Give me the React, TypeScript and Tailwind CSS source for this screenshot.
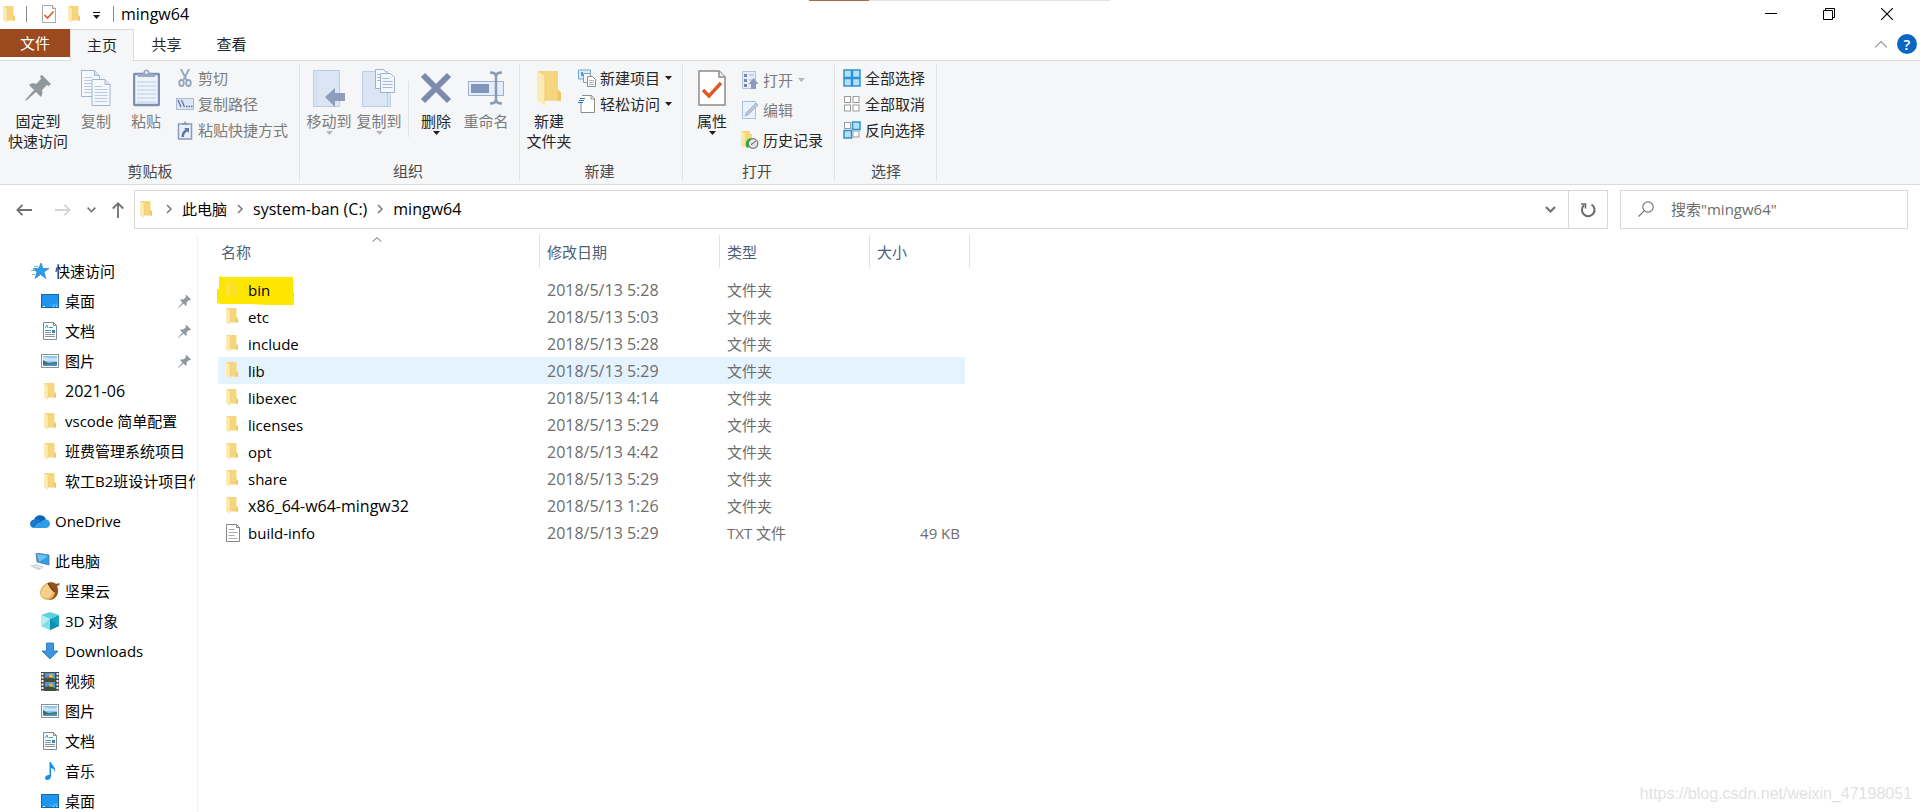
import type { ReactNode } from "react";

const Folder = ({ className = "w-3 h-[17px]" }: { className?: string }) => (
  <svg viewBox="0 0 24 34" className={className} preserveAspectRatio="none">
    <path d="M1 0H21V18L24 21V29H5Z" fill="#f5d67f" />
    <path d="M21 18l3 3v8h-4z" fill="#eec765" />
    <path d="M0 0l8 5v29L0 29z" fill="#fdebb6" />
    <path d="M8 5v24" stroke="#ecca70" strokeWidth="1" />
  </svg>
);

const CheckedDoc = ({ className }: { className: string }) => (
  <svg viewBox="0 0 28 36" className={className} fill="none">
    <path d="M1 1h20l6 6v28H1z" fill="#fff" stroke="#8c8c8c" strokeWidth="1.5" />
    <path d="M21 1v6h6" stroke="#8c8c8c" strokeWidth="1.5" fill="#eee" />
    <path d="M5 20l6 6L23 13" stroke="#dd5a22" strokeWidth="3.4" />
  </svg>
);

const Pin = ({ className }: { className: string }) => (
  <svg viewBox="0 0 26 26" className={className} fill="#8f989e">
    <path d="M17 0l9 9-2 2-2-1-5 5c1 3 0 5-1 7l-5-5-9 8-2 1 1-2 8-9-5-5c2-2 5-2 7-1l5-5-1-3z" />
  </svg>
);

const Arrow = ({ className = "text-[#1f1f1f]" }: { className?: string }) => (
  <svg viewBox="0 0 7 4" className={`w-[7px] h-1 shrink-0 ${className}`}>
    <path d="M0 0h7L3.5 4z" fill="currentColor" />
  </svg>
);

const Chevron = () => (
  <svg viewBox="0 0 6 10" className="w-[6px] h-[10px]" fill="none" stroke="#777" strokeWidth="1.5">
    <path d="M1 1l4 4-4 4" />
  </svg>
);

const ChevronDown = () => (
  <svg viewBox="0 0 11 7" className="w-[11px] h-[7px]" fill="none" stroke="#6f6f6f" strokeWidth="2">
    <path d="M1 1l4.5 4.5L10 1" />
  </svg>
);

const Page = ({ x, y }: { x: number; y: number }) => (
  <g transform={`translate(${x} ${y})`}>
    <path d="M.5.5h13l5 5v21h-18z" fill="#f4f8fd" stroke="#a3b5d3" />
    <path d="M13.5.5v5h5" fill="#dce6f4" stroke="#a3b5d3" />
    <path d="M3 7.5h8M3 10.5h13M3 13.5h13M3 16.5h13M3 19.5h13M3 22.5h13" stroke="#bccae0" />
  </g>
);

const CopyIcon = () => (
  <svg viewBox="0 0 30 37" className="w-[30px] h-[37px]">
    <Page x={0} y={0} />
    <Page x={10.5} y={9} />
  </svg>
);

const PasteIcon = () => (
  <svg viewBox="0 0 27 38" className="w-[27px] h-[38px]">
    <rect x="1" y="5" width="25" height="31" rx="1" fill="#eef4fb" stroke="#8090b4" strokeWidth="2.5" />
    <path d="M4 13h19M4 17h19M4 21h19M4 25h19M4 29h19M4 33h19" stroke="#bccbe2" />
    <path d="M5 8V5h5c0-6 7-6 7 0h5v3z" fill="#9aa9c6" />
    <circle cx="13.5" cy="3.5" r="1.3" fill="#f5f6f7" />
  </svg>
);

const ScissorsIcon = () => (
  <svg viewBox="0 0 18 18" className="w-[18px] h-[18px]" fill="none" stroke="#94a4c0" strokeWidth="1.8">
    <path d="M5 0l5.5 11M13 0L7.5 11" />
    <ellipse cx="5.5" cy="14" rx="2.3" ry="3" />
    <ellipse cx="12.5" cy="14" rx="2.3" ry="3" />
  </svg>
);

const PathIcon = () => (
  <svg viewBox="0 0 18 12" className="w-[18px] h-3">
    <rect x=".5" y=".5" width="17" height="11" fill="#dbe7f6" stroke="#a9bad6" />
    <path d="M2 2l3 7M5.5 2l3 7" stroke="#5b6c8c" strokeWidth="1.2" />
    <path d="M10 8.5h1.5M12.5 8.5H14M15 8.5h1.5" stroke="#5b6c8c" strokeWidth="1.5" />
  </svg>
);

const PasteShortcutIcon = () => (
  <svg viewBox="0 0 16 19" className="w-4 h-[19px]">
    <rect x="1.5" y="3" width="13" height="15" fill="#e8f0fa" stroke="#8a9bbd" strokeWidth="1.5" />
    <path d="M5 4V2h2c0-2 2-2 2 0h2v2z" fill="#8a9bbd" />
    <path d="M7 7h5v5l-1.7-1.7C8 12 7 13 7 16H4.5c0-4 1.5-6 4-7.5z" fill="#62779f" />
  </svg>
);

const MoveIcon = () => (
  <svg viewBox="0 0 32 37" className="w-8 h-[37px]">
    <path d="M.5.5h26v36H.5z" fill="#dbe6f5" stroke="#bccbe4" />
    <path d="M3.5.5v36" stroke="#cddaee" />
    <path d="M12 27l10-9v5h10v8H22v6z" fill="#8e9dbd" />
  </svg>
);

const CopyToIcon = () => (
  <svg viewBox="0 0 34 38" className="w-[34px] h-[38px]">
    <path d="M.5 2.5h25v20l3 3v12H.5z" fill="#dbe6f5" stroke="#bccbe4" />
    <path d="M25.5 24v13" stroke="#bccbe4" />
    <path d="M13.5.5h8l3 3v16h-11z" fill="#f4f8fd" stroke="#9db0d0" />
    <path d="M18.5 4.5h10l4 4v15h-14z" fill="#f4f8fd" stroke="#9db0d0" />
    <path d="M20.5 9.5h7M20.5 12.5h10M20.5 15.5h10M20.5 18.5h10M15 5.5h3M15 8.5h3M15 11.5h3" stroke="#a8b8d5" />
  </svg>
);

const DeleteIcon = () => (
  <svg viewBox="0 0 32 32" className="w-8 h-8" stroke="#7c8bab" strokeWidth="6">
    <path d="M3 3l26 26M29 3L3 29" />
  </svg>
);

const RenameIcon = () => (
  <svg viewBox="0 0 36 34" className="w-9 h-[34px]" fill="none">
    <rect x=".5" y="10.5" width="35" height="14" fill="#e3eefa" stroke="#9db0d0" />
    <rect x="3" y="13" width="18" height="9" fill="#8396b9" />
    <path d="M22 1.5c4 0 6 1 6 4 0-3 2-4 6-4M22 32.5c4 0 6-1 6-4 0 3 2 4 6 4M28 5v24" stroke="#8b99b3" strokeWidth="2.5" />
  </svg>
);

const NewItemIcon = () => (
  <svg viewBox="0 0 18 18" className="w-[18px] h-[18px]">
    <path d="M.5 1h12v9H.5z" fill="#d9effb" stroke="#6aa9d0" />
    <path d="M4 3v4" stroke="#2d7fb5" strokeWidth="1.5" />
    <path d="M5.5 4.5h7v9h-7z" fill="#f7f7f7" stroke="#9a9a9a" />
    <path d="M9.5 7.5h5l3 3v7h-8z" fill="#fff" stroke="#8c8c8c" />
    <path d="M11 11.5h5M11 13.5h5M11 15.5h5" stroke="#a5b7c7" />
  </svg>
);

const EasyAccessIcon = () => (
  <svg viewBox="0 0 18 18" className="w-[18px] h-[18px]">
    <path d="M4 .5h9.5l3 3v14H3V8" fill="#fff" stroke="#8c8c8c" />
    <path d="M13 .5V4h3.5" fill="none" stroke="#8c8c8c" />
    <path d="M2 3.5h5M1 5.5h5M0 7.5h5" stroke="#2f77b0" strokeWidth="1.2" />
  </svg>
);

const OpenIcon = () => (
  <svg viewBox="0 0 17 19" className="w-[17px] h-[19px]">
    <path d="M.5.5h13v17H.5z" fill="#e6eef8" stroke="#b3c2da" />
    <path d="M2 3h3v3H2zM2 8h3v3H2zM2 13h3v3H2z" fill="#7487ab" />
    <path d="M7 4h5M7 9h5" stroke="#a7b6d0" />
    <path d="M11.5 7l5 6H14v5H9v-5H6.5z" fill="#8a9bbd" />
  </svg>
);

const EditIcon = () => (
  <svg viewBox="0 0 17 18" className="w-[17px] h-[18px]">
    <path d="M.5.5h13v17H.5z" fill="#e9f1fb" stroke="#aebfd9" />
    <path d="M3 15l1-3L14 2l2 2L6 14z" fill="#b9c8df" stroke="#9aabc8" strokeWidth=".8" />
  </svg>
);

const HistoryIcon = () => (
  <svg viewBox="0 0 18 18" className="w-[18px] h-[18px]">
    <path d="M0 0h9v3h2v12H3z" fill="#f6d777" />
    <path d="M0 0l4 2v15l-4-2z" fill="#fce9a5" />
    <circle cx="12" cy="12.5" r="4.8" fill="#dfe3e5" stroke="#777" strokeWidth="1.2" />
    <path d="M12 12.5l2.5-2.5M12 12.5l-2 1" stroke="#444" />
    <path d="M5 16c-1-5 1-9 6-9L9.500 9C7 11 7 14 8 17z" fill="#35a542" />
  </svg>
);

const SelectTile = ({ x, y, on }: { x: number; y: number; on: boolean }) => (
  <rect
    x={on ? x : x + 0.5}
    y={on ? y : y + 0.5}
    width={on ? 7.5 : 6}
    height={on ? 7.5 : 6}
    fill={on ? "#b3e0fa" : "#fff"}
    stroke={on ? "#2e93cf" : "#9b9b9b"}
    strokeWidth={on ? 1.5 : 1}
  />
);

const SelectIcon = ({ on }: { on: boolean[] }) => (
  <svg viewBox="0 0 18 18" className="w-[18px] h-[18px]">
    <SelectTile x={1} y={1} on={on[0]} />
    <SelectTile x={9.5} y={1} on={on[1]} />
    <SelectTile x={1} y={9.5} on={on[2]} />
    <SelectTile x={9.5} y={9.5} on={on[3]} />
  </svg>
);

const StarIcon = () => (
  <svg viewBox="0 0 18 16" className="w-[18px] h-4">
    <path d="M10 0l2 5.500h6l-5 3.500 2 6.500-5.500-4-5.500 4L6 9 2 5.500h5.500z" fill="#2a9be8" stroke="#1b7cc4" strokeWidth=".6" />
    <path d="M3 3.500h4M0 7.500h4M1 11.500h3" stroke="#6cbcf0" />
  </svg>
);

const CloudIcon = () => (
  <svg viewBox="0 0 20 13" className="w-5 h-[13px]">
    <path d="M4 5c1-5 9-7 12-1l-5 5z" fill="#0f62b5" />
    <path d="M4 4.500c3-1 5 0 7 2L4 13C-1 13-1.500 5 4 4.500z" fill="#1a79d0" />
    <path d="M16 4.500c5 0 5.500 8 0 8.500H4l7-6c1-1.500 3-2.500 5-2.500z" fill="#2b9cea" />
  </svg>
);

const PcIcon = () => (
  <svg viewBox="0 0 20 17" className="w-5 h-[17px]">
    <path d="M6 0l13 2v10L7 9z" fill="#2f9ce6" stroke="#5d7386" strokeWidth=".8" />
    <path d="M7 1l11 2-9 6z" fill="#6cc2f6" />
    <path d="M0 13l6-2 8 3-5 3z" fill="#c4ccd2" />
    <path d="M3 13l8 2M5 12l7 2.500" stroke="#fff" strokeWidth=".6" />
  </svg>
);

const DesktopIcon = () => (
  <svg viewBox="0 0 18 14" className="w-[18px] h-[14px]">
    <rect x=".5" y=".5" width="17" height="13" fill="#1e96ee" stroke="#1467a8" />
    <path d="M17 1v8L7 12h10z" fill="#3dabf7" />
    <path d="M2 12.500h2M12 12.500h1M15 12.500h1" stroke="#d9efff" />
  </svg>
);

const DocumentIcon = () => (
  <svg viewBox="0 0 16 18" className="w-4 h-[18px]">
    <path d="M1.500.5h10l3 3v14h-13z" fill="#fff" stroke="#808a90" />
    <path d="M11.500.5v3h3" fill="none" stroke="#808a90" />
    <path d="M3 6l2-3 1 3M7 5.500h4M3 8.500h6" stroke="#3ba3cf" fill="none" />
    <path d="M3 10.500h6M3 12.500h10M3 14.500h10" stroke="#8a9398" />
    <path d="M10 8h3v3h-3z" fill="#3a87b8" />
  </svg>
);

const PictureIcon = () => (
  <svg viewBox="0 0 18 14" className="w-[18px] h-[14px]">
    <rect x=".5" y=".5" width="17" height="13" fill="#fff" stroke="#8a9297" />
    <rect x="2" y="2" width="14" height="10" fill="#8fc5ef" />
    <path d="M2 3c4 0 5 2 14 1v3H2z" fill="#c7e4f8" />
    <path d="M2 6l5 3 9-1v4H2z" fill="#3e6f6c" />
    <path d="M2 10.500l14-1V12H2z" fill="#4c8fc0" />
  </svg>
);

const AcornIcon = () => (
  <svg viewBox="0 0 20 18" className="w-5 h-[18px]">
    <path d="M6 2c3-2.500 8-2 10 0l3.500-1v2L17 4c3 6 0 14-8 14z" fill="#95521f" />
    <path d="M8 1C3 2 0 7 0 11c0 4 4 7 8 7 4-1 7-4 7-8-3-2-5-5-7-9z" fill="#e6b25a" />
    <path d="M8 2C4 4 1 8 1 12c0 2 2 4 5 4 4 0 6-3 7-6-2-2-4-5-5-8z" fill="#f4d08b" />
    <path d="M8 1c2 4 4 7 7 9" stroke="#6e3510" strokeWidth="1.200" fill="none" />
  </svg>
);

const CubeIcon = () => (
  <svg viewBox="0 0 18 18" className="w-[18px] h-[18px]">
    <path d="M0 3l9-3 9 3-9 4z" fill="#5fd0dd" />
    <path d="M0 3l9 4v11l-9-4z" fill="#b5eff3" />
    <path d="M0 14l9-7v11z" fill="#7fdfe8" />
    <path d="M18 3L9 7v11l9-4z" fill="#16a7bf" />
    <path d="M18 14L9 7v11z" fill="#0d8fae" />
  </svg>
);

const DownloadIcon = () => (
  <svg viewBox="0 0 18 18" className="w-[18px] h-[18px]">
    <path d="M5.500 1h7v8H17l-8 8-8-8h4.500z" fill="#3d94e0" stroke="#2474bd" strokeWidth=".8" />
  </svg>
);

const VideoIcon = () => (
  <svg viewBox="0 0 18 19" className="w-[18px] h-[19px]">
    <path d="M0 0h18v19H0z" fill="#4a4a4a" />
    <path d="M1.500 1v18M16.500 1v18" stroke="#fff" strokeWidth="2" strokeDasharray="2 1.500" />
    <path d="M4 1h10v8H4zM4 10h10v8H4z" fill="#4c9be0" />
    <path d="M4 6l4-1 6 2v2H4zM4 15l5-1 5 2v2H4z" fill="#39562f" />
    <circle cx="10" cy="4" r="2" fill="#f0c22e" />
    <circle cx="7" cy="5.500" r="1.300" fill="#d9442c" />
    <circle cx="10" cy="13" r="2" fill="#e9a92a" />
  </svg>
);

const MusicIcon = () => (
  <svg viewBox="0 0 18 18" className="w-[18px] h-[18px]">
    <path d="M8.500 0H10c0 3 5 4 4 10-1-3-2-3.500-4-4v8c0 5-6 5-6 2 0-2 2-3.500 4.500-3z" fill="#1a8ee0" />
  </svg>
);

const TextFileIcon = () => (
  <svg viewBox="0 0 14 18" className="w-[14px] h-[18px]">
    <path d="M.5.5h10l3 3v14H.5z" fill="#fff" stroke="#868686" />
    <path d="M10.500.5v3h3" fill="none" stroke="#868686" />
    <path d="M2.500 5.500h6M2.500 8.500h9M2.500 11.500h6M2.500 14.500h9" stroke="#ababab" />
  </svg>
);

type BigProps = { icon: ReactNode; lines: string[]; width: string; arrow?: boolean; disabled?: boolean };

const BigButton = ({ icon, lines, width, arrow, disabled }: BigProps) => (
  <button disabled={disabled} className={`${width} shrink-0 pt-[3px] flex flex-col items-center ${disabled ? "text-[#7b7b7b]" : "text-[#262626]"}`}>
    <span className="h-10 mb-[3px] flex items-center justify-center">{icon}</span>
    {lines.map((line) => (
      <span key={line} className="leading-5 whitespace-nowrap">{line}</span>
    ))}
    {arrow && <Arrow className={disabled ? "text-[#b5b5b5]" : "text-[#1f1f1f]"} />}
  </button>
);

type SmallProps = { icon: ReactNode; label: string; height?: string; arrow?: boolean; disabled?: boolean };

const SmallButton = ({ icon, label, height = "h-[26px]", arrow, disabled }: SmallProps) => (
  <button disabled={disabled} className={`${height} flex items-center whitespace-nowrap ${disabled ? "text-[#7b7b7b]" : "text-[#262626]"}`}>
    <span className="w-[18px] mr-1 flex justify-center">{icon}</span>
    {label}
    {arrow && <span className="ml-[5px]"><Arrow className={disabled ? "text-[#b5b5b5]" : "text-[#1f1f1f]"} /></span>}
  </button>
);

const Group = ({ label, className, children }: { label: string; className: string; children: ReactNode }) => (
  <section className={`${className} shrink-0 my-[3px] pt-px border-r border-[#e0e1e3] flex flex-col justify-between`}>
    <div className="flex items-start">{children}</div>
    <div className="h-5 leading-5 pr-[7px] text-center text-[#4a4a4a]">{label}</div>
  </section>
);

type NavItem = { name: string; icon: ReactNode; pinned?: boolean; numeric?: boolean };

const quickAccess: NavItem[] = [
  { name: "桌面", icon: <DesktopIcon />, pinned: true },
  { name: "文档", icon: <DocumentIcon />, pinned: true },
  { name: "图片", icon: <PictureIcon />, pinned: true },
  { name: "2021-06", icon: <Folder />, numeric: true },
  { name: "vscode 简单配置", icon: <Folder /> },
  { name: "班费管理系统项目", icon: <Folder /> },
  { name: "软工B2班设计项目作业", icon: <Folder /> },
];

const thisPc: NavItem[] = [
  { name: "坚果云", icon: <AcornIcon /> },
  { name: "3D 对象", icon: <CubeIcon /> },
  { name: "Downloads", icon: <DownloadIcon /> },
  { name: "视频", icon: <VideoIcon /> },
  { name: "图片", icon: <PictureIcon /> },
  { name: "文档", icon: <DocumentIcon /> },
  { name: "音乐", icon: <MusicIcon /> },
  { name: "桌面", icon: <DesktopIcon /> },
];

const files = [
  { name: "bin", date: "2018/5/13 5:28", type: "文件夹", marked: true },
  { name: "etc", date: "2018/5/13 5:03", type: "文件夹" },
  { name: "include", date: "2018/5/13 5:28", type: "文件夹" },
  { name: "lib", date: "2018/5/13 5:29", type: "文件夹", hovered: true },
  { name: "libexec", date: "2018/5/13 4:14", type: "文件夹" },
  { name: "licenses", date: "2018/5/13 5:29", type: "文件夹" },
  { name: "opt", date: "2018/5/13 4:42", type: "文件夹" },
  { name: "share", date: "2018/5/13 5:29", type: "文件夹" },
  { name: "x86_64-w64-mingw32", date: "2018/5/13 1:26", type: "文件夹", numeric: true },
  { name: "build-info", date: "2018/5/13 5:29", type: "TXT 文件", size: "49 KB" },
];

const NavRoot = ({ name, icon }: NavItem) => (
  <a href="#" className="h-[30px] pl-[30px] flex items-center text-black">
    <span className="w-5 mr-[5px] flex justify-center">{icon}</span>
    {name}
  </a>
);

const NavChild = ({ name, icon, pinned, numeric }: NavItem) => (
  <a href="#" className="h-[30px] pl-10 pr-[2px] flex items-center text-black">
    <span className="w-5 mr-[5px] shrink-0 flex justify-center">{icon}</span>
    <span className={`flex-1 overflow-hidden whitespace-nowrap ${numeric ? "text-base leading-5" : ""}`}>{name}</span>
    {pinned && <span className="mr-1"><Pin className="w-[13px] h-[13px]" /></span>}
  </a>
);

const TitleBar = () => (
  <header className="h-[29px] pb-px flex items-center justify-between">
    <div className="flex items-center pl-[3px]">
      <Folder />
      <span className="w-px h-4 ml-[11px] mr-[15px] bg-[#8a8a8a]" />
      <CheckedDoc className="w-[14px] h-[18px]" />
      <span className="ml-3"><Folder /></span>
      <button aria-label="自定义快速访问工具栏" className="ml-[13px] mt-[2px] flex flex-col items-center gap-[2px]">
        <span className="w-[7px] h-px bg-black" />
        <Arrow />
      </button>
      <span className="w-px h-4 ml-[13px] mr-[7px] bg-[#8a8a8a]" />
      <h1 className="text-base leading-5 text-black">mingw64</h1>
    </div>
    <div className="flex pr-1">
      <button aria-label="最小化" className="w-[58px] h-7 flex items-center justify-center">
        <svg viewBox="0 0 12 12" className="w-3 h-3" stroke="#000"><path d="M0 5.500h12" /></svg>
      </button>
      <button aria-label="还原" className="w-[58px] h-7 flex items-center justify-center">
        <svg viewBox="0 0 12 12" className="w-3 h-3" fill="none" stroke="#000"><path d="M.5 2.500h9v9h-9zM2.500 2.500v-2h9v9h-2" /></svg>
      </button>
      <button aria-label="关闭" className="w-[58px] h-7 flex items-center justify-center">
        <svg viewBox="0 0 12 12" className="w-3 h-3" stroke="#000" strokeWidth="1.200"><path d="M0 0l12 12M12 0L0 12" /></svg>
      </button>
    </div>
  </header>
);

const Tabs = () => (
  <nav className="h-8 flex items-stretch text-[#262626]">
    <div className="border-b border-[#dadbdc]">
      <button className="w-[70px] h-7 bg-[#9a4a1e] text-white">文件</button>
    </div>
    <button className="w-16 pb-[2px] border border-b-0 border-[#dadbdc] bg-[#f5f6f7]">主页</button>
    <div className="flex-1 flex items-center justify-between pb-px border-b border-[#dadbdc]">
      <div className="flex">
        <button className="w-[65px]">共享</button>
        <button className="w-[65px]">查看</button>
      </div>
      <div className="flex items-center gap-[10px] pr-[3px]">
        <button aria-label="折叠功能区">
          <svg viewBox="0 0 12 7" className="w-3 h-[7px]" fill="none" stroke="#9a9a9a" strokeWidth="1.200"><path d="M0 6.500l6-6 6 6" /></svg>
        </button>
        <button aria-label="帮助" className="w-5 h-5 rounded-full bg-[#0a66c2] text-white text-[15px] leading-5 font-semibold">?</button>
      </div>
    </div>
  </nav>
);

const Ribbon = () => (
  <div className="h-[124px] flex bg-[#f5f6f7] border-b border-[#dadbdc]">
    <Group label="剪贴板" className="w-[300px] pl-2">
      <BigButton width="w-[60px]" icon={<Pin className="w-[26px] h-[26px]" />} lines={["固定到", "快速访问"]} />
      <BigButton width="w-14" icon={<CopyIcon />} lines={["复制"]} disabled />
      <BigButton width="w-11" icon={<PasteIcon />} lines={["粘贴"]} disabled />
      <div className="ml-2 flex flex-col">
        <SmallButton icon={<ScissorsIcon />} label="剪切" disabled />
        <SmallButton icon={<PathIcon />} label="复制路径" disabled />
        <SmallButton icon={<PasteShortcutIcon />} label="粘贴快捷方式" disabled />
      </div>
    </Group>
    <Group label="组织" className="w-[220px] pl-1">
      <BigButton width="w-[50px]" icon={<MoveIcon />} lines={["移动到"]} arrow disabled />
      <BigButton width="w-[50px]" icon={<CopyToIcon />} lines={["复制到"]} arrow disabled />
      <span className="w-px h-14 mt-4 ml-1 mr-[2px] bg-[#e0e1e3]" />
      <BigButton width="w-[50px]" icon={<DeleteIcon />} lines={["删除"]} arrow />
      <BigButton width="w-[50px]" icon={<RenameIcon />} lines={["重命名"]} disabled />
    </Group>
    <Group label="新建" className="w-[163px] pl-1">
      <BigButton width="w-[50px]" icon={<Folder className="w-6 h-[35px]" />} lines={["新建", "文件夹"]} />
      <div className="ml-1 flex flex-col">
        <SmallButton icon={<NewItemIcon />} label="新建项目" arrow />
        <SmallButton icon={<EasyAccessIcon />} label="轻松访问" arrow />
      </div>
    </Group>
    <Group label="打开" className="w-[152px] pl-1">
      <BigButton width="w-[50px]" icon={<CheckedDoc className="w-7 h-9" />} lines={["属性"]} arrow />
      <div className="ml-1 flex flex-col">
        <SmallButton height="h-[30px]" icon={<OpenIcon />} label="打开" arrow disabled />
        <SmallButton height="h-[30px]" icon={<EditIcon />} label="编辑" disabled />
        <SmallButton height="h-[30px]" icon={<HistoryIcon />} label="历史记录" />
      </div>
    </Group>
    <Group label="选择" className="w-[102px] pl-2">
      <div className="flex flex-col">
        <SmallButton icon={<SelectIcon on={[true, true, true, true]} />} label="全部选择" />
        <SmallButton icon={<SelectIcon on={[false, false, false, false]} />} label="全部取消" />
        <SmallButton icon={<SelectIcon on={[false, true, true, false]} />} label="反向选择" />
      </div>
    </Group>
  </div>
);

const AddressBar = () => (
  <div className="pt-[5px] pr-3 flex items-center">
    <div className="w-[134px] shrink-0 pl-4 flex items-center">
      <button aria-label="后退">
        <svg viewBox="0 0 16 12" className="w-4 h-3" fill="none" stroke="#6f6f6f" strokeWidth="1.800"><path d="M16 6H1M6.500.8L1.300 6l5.200 5.200" /></svg>
      </button>
      <button aria-label="前进" className="ml-[23px]">
        <svg viewBox="0 0 16 12" className="w-4 h-3" fill="none" stroke="#d4d4d4" strokeWidth="1.800"><path d="M0 6h15M9.500.8L14.700 6l-5.200 5.200" /></svg>
      </button>
      <button aria-label="最近浏览的位置" className="ml-4">
        <svg viewBox="0 0 9 6" className="w-[9px] h-[6px]" fill="none" stroke="#777" strokeWidth="1.600"><path d="M.6.6l3.900 4L8.400.6" /></svg>
      </button>
      <button aria-label="上移" className="ml-4">
        <svg viewBox="0 0 12 16" className="w-3 h-4" fill="none" stroke="#6f6f6f" strokeWidth="1.800"><path d="M6 16V1M.8 6.500L6 1.300l5.200 5.200" /></svg>
      </button>
    </div>
    <div className="flex-1 h-[39px] flex border border-[#d9d9d9] text-black">
      <div className="flex-1 flex items-center pl-[5px] pb-px">
        <Folder />
        <span className="ml-[14px] mr-[10px]"><Chevron /></span>
        <button>此电脑</button>
        <span className="mx-[10px]"><Chevron /></span>
        <button className="text-base leading-5">system-ban (C:)</button>
        <span className="mx-[10px]"><Chevron /></span>
        <button className="text-base leading-5">mingw64</button>
      </div>
      <button aria-label="以前的位置" className="w-9 flex items-center justify-center"><ChevronDown /></button>
      <button aria-label="刷新" className="w-[39px] border-l border-[#d9d9d9] flex items-center justify-center">
        <svg viewBox="0 0 16 16" className="w-4 h-4" fill="none" stroke="#6a6a6a" strokeWidth="2">
          <path d="M11.500 2.500A6.300 6.300 0 1 1 4 3.200" />
          <path d="M1 2h4.500v4.500" strokeWidth="1.600" />
        </svg>
      </button>
    </div>
    <label className="w-[288px] h-[39px] ml-3 pb-px border border-[#d9d9d9] flex items-center pl-[17px]">
      <svg viewBox="0 0 16 16" className="w-4 h-4 shrink-0" fill="none" stroke="#777" strokeWidth="1.200">
        <circle cx="10" cy="6" r="5.200" />
        <path d="M6.200 9.800L.5 15.500" />
      </svg>
      <input aria-label="搜索" type="text" placeholder={'搜索"mingw64"'} className="ml-[17px] flex-1 min-w-0 outline-none placeholder:text-[#6d6d6d]" />
    </label>
  </div>
);

const Sidebar = () => (
  <aside className="w-[198px] shrink-0 mt-[6px] pt-[21px] border-r border-[#f0f0f0] overflow-hidden">
    <NavRoot name="快速访问" icon={<StarIcon />} />
    {quickAccess.map((item) => <NavChild key={item.name} {...item} />)}
    <div className="mt-[10px] mb-[10px]">
      <NavRoot name="OneDrive" icon={<CloudIcon />} />
    </div>
    <NavRoot name="此电脑" icon={<PcIcon />} />
    {thisPc.map((item) => <NavChild key={item.name} {...item} />)}
  </aside>
);

const headCell = "h-[33px] border-r border-[#e2e2e2] flex items-center";

const FileTable = () => (
  <table className="w-[752px] self-start ml-5 mt-[6px] table-fixed border-collapse text-left">
    <colgroup>
      <col className="w-[322px]" />
      <col className="w-[180px]" />
      <col className="w-[150px]" />
      <col className="w-[95px]" />
      <col className="w-[5px]" />
    </colgroup>
    <thead className="text-[#4c607a]">
      <tr>
        <th className="h-[41px] p-0 align-top font-normal relative">
          <svg viewBox="0 0 10 5" className="absolute left-[154px] top-[2px] w-[10px] h-[5px]" fill="none" stroke="#666"><path d="M.5 4.800L5 .6l4.500 4.200" /></svg>
          <div className={`${headCell} pl-[3px]`}>名称</div>
        </th>
        <th className="p-0 align-top font-normal"><div className={`${headCell} pl-[7px]`}>修改日期</div></th>
        <th className="p-0 align-top font-normal"><div className={`${headCell} pl-[7px]`}>类型</div></th>
        <th colSpan={2} className="p-0 align-top font-normal"><div className={`${headCell} pl-[7px]`}>大小</div></th>
      </tr>
    </thead>
    <tbody className="text-[#6d6d6d]">
      {files.map((file) => {
        const bg = file.hovered ? "bg-[#e5f3ff]" : "";
        return (
          <tr key={file.name} className="h-[27px]">
            <td className={`p-0 relative ${bg}`}>
              {/* highlighter stroke behind the row */}
              {file.marked && (
                <svg viewBox="0 0 77 29" className="absolute -left-px top-0 w-[77px] h-[29px]">
                  <path d="M2 0l5 1h69v14l1 1v13H52l-20-1H4l-4-1V13h2z" fill="#ffe600" />
                </svg>
              )}
              <div className="relative flex items-center pl-2 text-black">
                <span className={`w-[14px] mr-2 ${file.marked ? "opacity-30" : ""}`}>{file.size ? <TextFileIcon /> : <Folder />}</span>
                <span className={file.numeric ? "text-base leading-5" : ""}>{file.name}</span>
              </div>
            </td>
            <td className={`p-0 pl-[7px] text-base leading-5 ${bg}`}>{file.date}</td>
            <td className={`p-0 pl-[7px] ${bg}`}>{file.type}</td>
            <td className={`p-0 pr-[5px] text-right ${bg}`}>{file.size}</td>
            <td className="p-0" />
          </tr>
        );
      })}
    </tbody>
  </table>
);

export default function App() {
  return (
    <div className="relative h-screen overflow-hidden flex flex-col bg-white text-[15px] leading-5 font-['Open_Sans','Noto_Sans_CJK_SC',sans-serif]">
      <div className="absolute top-0 left-[809px] flex">
        <span className="w-[60px] h-px bg-[#b0684a]" />
        <span className="w-[241px] h-px bg-[#e2e2e2]" />
      </div>
      <TitleBar />
      <Tabs />
      <Ribbon />
      <AddressBar />
      <main className="flex-1 min-h-0 flex">
        <Sidebar />
        <FileTable />
      </main>
      <p className="absolute right-2 bottom-2 text-base leading-5 text-[#e2e2e2] font-['Liberation_Sans',Arial,sans-serif]">
        https://blog.csdn.net/weixin_47198051
      </p>
    </div>
  );
}
